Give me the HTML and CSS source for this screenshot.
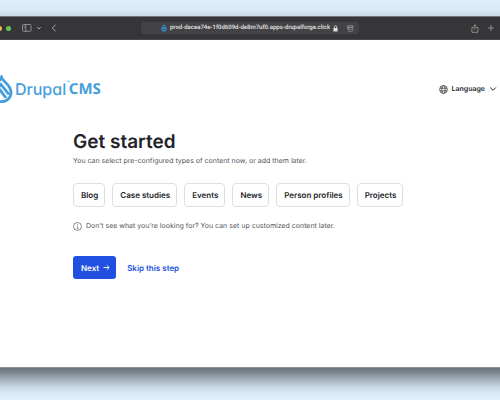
FILE: index.html
```html
<!DOCTYPE html>
<html lang="en">
<head>
<meta charset="utf-8">
<title>Drupal CMS</title>
<link rel="stylesheet" href="styles.css">
</head>
<body>
<div class="window">
  <div class="toolbar">
    <div class="toolbar-side">
      <span class="light yellow"></span>
      <span class="light green"></span>
      <button class="tool sidebar" aria-label="Sidebar"><svg width="10" height="8" viewBox="0 0 10 8"><rect x=".5" y=".5" width="8.5" height="6.8" rx="1"/><path d="M3.8.5v7M1.7 2.2h1M1.7 3.6h1"/></svg></button>
      <button class="tool tabs" aria-label="Tab groups"><svg width="6" height="8" viewBox="0 0 6 8"><path d="M1.3 3.3 3 4.8l1.7-1.5" stroke-width="1"/></svg></button>
      <button class="tool back" aria-label="Back"><svg width="6" height="8" viewBox="0 0 6 8"><path d="M4.5.9 1.3 4l3.2 3.1" stroke-width="1"/></svg></button>
    </div>
    <div class="address">
      <div class="address-text">
        <svg width="6" height="8" viewBox="0 0 6 8"><path d="M3 .8C2.3 2.2.7 3 .7 4.9a2.3 2.3 0 0 0 4.6 0C5.3 3 3.7 2.2 3 .8Z" fill="#245a80" stroke="#3f9bdc" stroke-width="1"/><path d="m1.8 5 1.2-1.3L4.2 5" fill="none" stroke="#9bd0f5" stroke-width=".7"/></svg>
        <span>prod-dacea74e-1f0d609d-de8m7uf0.apps-drupalforge.click</span>
        <svg width="5" height="7" viewBox="0 0 5 7"><path d="M1.3 3V1.9a1.2 1.2 0 0 1 2.4 0V3" fill="none" stroke="#ddd" stroke-width=".8"/><rect x=".4" y="3" width="4.2" height="3.5" rx=".5" fill="#ddd"/></svg>
      </div>
      <button class="tool" aria-label="Page settings"><svg width="7" height="7" viewBox="0 0 7 7"><path d="M.7 4.2V.8h5.2v2.7M.8 2.5h4.8M.7 4.3h2.6M1.2 6.3h2.2M4.2 4.5h2.2M4.2 6.3h1.6"/></svg></button>
    </div>
    <div class="toolbar-side right">
      <button class="tool" aria-label="Share"><svg width="8" height="9" viewBox="0 0 8 9"><path d="M2.7 3.5H.9v4.8h6V3.5H5.1M3.9 5.8V.8M2.3 2.3 3.9.7l1.6 1.6"/></svg></button>
      <button class="tool" aria-label="New tab"><svg width="8" height="8" viewBox="0 0 8 8"><path d="M4 1v6M1 4h6"/></svg></button>
    </div>
  </div>

  <header class="header">
    <a class="brand" href="#" aria-label="Drupal CMS">
      <svg class="drop" width="22" height="28" viewBox="0 0 22 28"><g fill="none" stroke="#459ddd" stroke-width="2.8"><path d="M10.5 2.5C9 7 1.5 9.5 1.5 17.5a9 9 0 0 0 18.5 0C20 9.500 12 7 10.500 2.500Z"/><path d="M3.500 17 10 9.500l8 10"/><path d="m5.500 19.500 4-4 5.500 7.500"/></g></svg>
      <span class="brand-drupal">Drupal</span><span class="brand-tm">™</span><span class="brand-cms">CMS</span>
    </a>
    <button class="language">
      <svg width="9" height="9" viewBox="0 0 9 9"><circle cx="4.5" cy="4.5" r="3.9"/><ellipse cx="4.5" cy="4.5" rx="1.7" ry="3.9"/><path d="M1 3.2h7M1 5.8h7"/></svg>
      <span>Language</span>
      <svg width="8" height="8" viewBox="0 0 8 8"><path d="M1.2 2.5 4 5.3l2.8-2.8" stroke-width="1"/></svg>
    </button>
  </header>

  <main class="content">
    <h1>Get started</h1>
    <p class="intro">You can select pre-configured types of content now, or add them later.</p>
    <div class="options">
      <button>Blog</button>
      <button>Case studies</button>
      <button>Events</button>
      <button>News</button>
      <button>Person profiles</button>
      <button>Projects</button>
    </div>
    <p class="hint">
      <svg width="9" height="9" viewBox="0 0 9 9"><circle cx="4.5" cy="4.5" r="4" fill="none" stroke="#55565b" stroke-width=".7"/><path d="M3.8 4h.8v2.5M3.6 6.5h2M4.4 2.2v.8" fill="none" stroke="#55565b" stroke-width=".6"/></svg>
      <span>Don’t see what you’re looking for? You can set up customized content later.</span>
    </p>
    <div class="actions">
      <button class="next">Next <svg width="7" height="7" viewBox="0 0 7 7"><path d="M.5 3.5H6M3.8 1.2l2.4 2.3-2.4 2.3" fill="none" stroke="#fff" stroke-width=".9"/></svg></button>
      <a class="skip" href="#">Skip this step</a>
    </div>
  </main>
</div>
<div class="shadow"></div>
</body>
</html>
```

FILE: styles.css
```css
* {
  box-sizing: border-box;
}

body {
  margin: 0;
  min-height: 100vh;
  display: flex;
  flex-direction: column;
  padding-top: 16px;
  background: linear-gradient(#def0fe, #d8e9f7 10px, #c8d8e6 16px, #def0fe 17px);
  font-family: Inter, "Liberation Sans", sans-serif;
  font-size: 8px;
  line-height: 12px;
  color: #232429;
  text-rendering: geometricPrecision;
}

button {
  font: inherit;
  color: inherit;
  text-rendering: inherit;
  background: none;
  border: 0;
  padding: 0;
}

a {
  text-decoration: none;
}

svg {
  display: block;
  flex: none;
}

.window {
  flex: 1;
  background: #fff;
  border-bottom: 1px solid #8b9296;
  overflow: hidden;
}

.toolbar {
  height: 24px;
  display: grid;
  grid-template-columns: 1fr 218px 1fr;
  align-items: center;
  background: #363638;
  border-top: 1px solid #737577;
  border-bottom: 1px solid #48484a;
}

.toolbar-side {
  display: flex;
  align-items: center;
}

.right {
  justify-content: flex-end;
  gap: 8px;
  padding-right: 5px;
}

.light {
  width: 5px;
  height: 5px;
  border-radius: 50%;
}

.yellow {
  background: #f5bd4f;
  margin-left: -3px;
}

.green {
  background: #61c554;
  margin-left: 4px;
}

.tool svg {
  fill: none;
  stroke: #b0b0b2;
  stroke-width: 0.7;
}

.sidebar {
  margin-left: 11px;
}

.tabs {
  margin-left: 4px;
}

.back {
  margin-left: 9px;
}

.address {
  height: 12px;
  display: flex;
  align-items: center;
  padding: 0 5px 0 20px;
  border-radius: 3px;
  background: #434346;
  color: #e6e6e6;
  font-family: Roboto, "Liberation Sans", sans-serif;
  font-size: 6px;
  font-weight: 500;
  line-height: 14px;
}

.address-text {
  flex: 1;
  display: flex;
  align-items: center;
  gap: 3px;
  white-space: nowrap;
}

.header {
  display: flex;
  justify-content: space-between;
  align-items: center;
  padding: 34px 3px 0 0;
}

.brand {
  display: flex;
  align-items: center;
  height: 30px;
  color: #459ddd;
  line-height: 20px;
}

.drop {
  margin-left: -9px;
}

.brand-drupal {
  margin-left: 2px;
  font-size: 16px;
  font-weight: 500;
  font-feature-settings: "cv11";
}

.brand-tm {
  align-self: flex-start;
  margin-right: -1px;
  font-size: 6px;
}

.brand-cms {
  font-family: "Noto Sans", sans-serif;
  font-size: 15px;
  font-weight: 700;
  line-height: 22px;
}

.language {
  display: flex;
  align-items: center;
  gap: 4px;
  font-size: 7px;
  font-weight: 600;
}

.language svg {
  fill: none;
  stroke: #232429;
  stroke-width: 0.7;
}

.content {
  padding: 24px 73px 0;
}

h1 {
  margin: 0;
  font-size: 19px;
  line-height: 27px;
  font-weight: 600;
}

p {
  margin: 0;
  font-size: 7px;
  color: #55565b;
}

.options {
  display: flex;
  gap: 7px;
  margin-top: 16px;
}

.options button {
  height: 24px;
  padding: 0 6px 0 7px;
  border: 1px solid #dedfe3;
  border-radius: 4px;
  font-weight: 600;
  white-space: nowrap;
}

.hint {
  display: flex;
  align-items: center;
  gap: 4px;
  margin-top: 13px;
}

.actions {
  display: flex;
  align-items: center;
  gap: 11px;
  margin-top: 24px;
  font-weight: 600;
}

.next {
  display: flex;
  align-items: center;
  gap: 4px;
  height: 23px;
  padding: 0 6px 0 8px;
  border-radius: 3px;
  background: #2150e0;
  color: #fff;
}

.skip {
  color: #2150e0;
}

.shadow {
  height: 32px;
  background: linear-gradient(#687279, #7d8992 5px, #a5b4bf 12px, #c6d7e4 19px, #d9ebf9 26px, #def0fe);
}
```
